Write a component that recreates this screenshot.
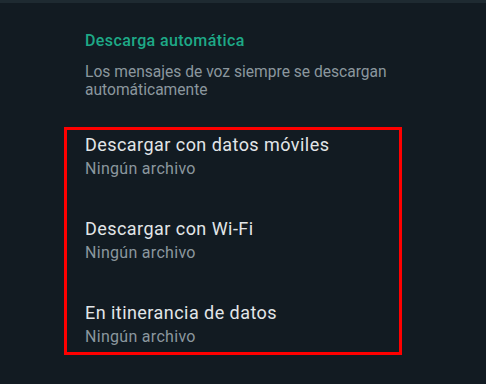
const items = [
  { title: "Descargar con datos móviles", value: "Ningún archivo" },
  { title: "Descargar con Wi-Fi", value: "Ningún archivo" },
  { title: "En itinerancia de datos", value: "Ningún archivo" },
]

export default function App() {
  return (
    <div
      className="h-[384px] w-[486px] overflow-hidden bg-[#121b22]"
      style={{ fontFamily: "Roboto, 'Noto Sans', sans-serif" }}
    >
      <div className="h-[3px] bg-[#1e2a31]" />

      <div className="pl-[85px] pt-[28px]">
        <h3 className="text-[16px] leading-[20px] font-medium tracking-[0.4px] text-[#1ea987]">
          Descarga automática
        </h3>
        <p className="mt-[12px] w-[330px] text-[15.6px] leading-[18px] text-[#8b979e]">
          Los mensajes de voz siempre se descargan automáticamente
        </p>
      </div>

      <div className="ml-[64px] mt-[28px] w-[338px] border-[3px] border-[#ff0000] pt-[4px] pb-[5px]">
        {items.map((item, i) => (
          <div key={item.title} className={i > 0 ? "mt-[39.5px] pl-[18px]" : "pl-[18px]"}>
            <div className="text-[18px] leading-[22px] tracking-[0.45px] text-[#e2e6e8]">
              {item.title}
            </div>
            <div className="mt-[2.5px] text-[16px] leading-[20px] tracking-[0.3px] text-[#8b979e]">
              {item.value}
            </div>
          </div>
        ))}
      </div>
    </div>
  )
}
